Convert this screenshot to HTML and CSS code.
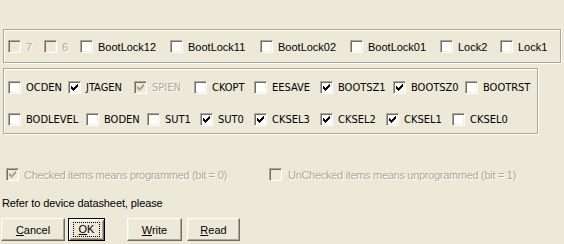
FILE: index.html
```html
<!DOCTYPE html>
<html lang="en">
<head>
    <meta charset="UTF-8">
    <title>Fuse Bits</title>
    <link rel="stylesheet" href="styles.css">
</head>
<body>
    <div class="dialog">
        <!-- Lock bits -->
        <div class="group lock-group">
            <label class="fuse disabled"><span class="box"></span><span class="text">7</span></label>
            <label class="fuse disabled"><span class="box"></span><span class="text">6</span></label>
            <label class="fuse"><span class="box"></span><span class="text">BootLock12</span></label>
            <label class="fuse"><span class="box"></span><span class="text">BootLock11</span></label>
            <label class="fuse"><span class="box"></span><span class="text">BootLock02</span></label>
            <label class="fuse"><span class="box"></span><span class="text">BootLock01</span></label>
            <label class="fuse"><span class="box"></span><span class="text">Lock2</span></label>
            <label class="fuse"><span class="box"></span><span class="text">Lock1</span></label>
        </div>

        <!-- Fuse bits -->
        <div class="group fuse-group">
            <div class="fuse-row high-row">
                <label class="fuse"><span class="box"></span><span class="text">OCDEN</span></label>
                <label class="fuse"><span class="box checked"><svg viewBox="0 0 7 7"><path d="M0 2h1v1h1v1h1v-1h1v-1h1v-1h1v-1h1v3h-1v1h-1v1h-1v1h-1v1h-1v-1h-1v-1h-1v-1h-1z"/></svg></span><span class="text">JTAGEN</span></label>
                <label class="fuse disabled"><span class="box checked"><svg viewBox="0 0 7 7"><path d="M0 2h1v1h1v1h1v-1h1v-1h1v-1h1v-1h1v3h-1v1h-1v1h-1v1h-1v1h-1v-1h-1v-1h-1v-1h-1z"/></svg></span><span class="text">SPIEN</span></label>
                <label class="fuse"><span class="box"></span><span class="text">CKOPT</span></label>
                <label class="fuse"><span class="box"></span><span class="text">EESAVE</span></label>
                <label class="fuse"><span class="box checked"><svg viewBox="0 0 7 7"><path d="M0 2h1v1h1v1h1v-1h1v-1h1v-1h1v-1h1v3h-1v1h-1v1h-1v1h-1v1h-1v-1h-1v-1h-1v-1h-1z"/></svg></span><span class="text">BOOTSZ1</span></label>
                <label class="fuse"><span class="box checked"><svg viewBox="0 0 7 7"><path d="M0 2h1v1h1v1h1v-1h1v-1h1v-1h1v-1h1v3h-1v1h-1v1h-1v1h-1v1h-1v-1h-1v-1h-1v-1h-1z"/></svg></span><span class="text">BOOTSZ0</span></label>
                <label class="fuse"><span class="box"></span><span class="text">BOOTRST</span></label>
            </div>
            <div class="fuse-row low-row">
                <label class="fuse"><span class="box"></span><span class="text">BODLEVEL</span></label>
                <label class="fuse"><span class="box"></span><span class="text">BODEN</span></label>
                <label class="fuse"><span class="box"></span><span class="text">SUT1</span></label>
                <label class="fuse"><span class="box checked"><svg viewBox="0 0 7 7"><path d="M0 2h1v1h1v1h1v-1h1v-1h1v-1h1v-1h1v3h-1v1h-1v1h-1v1h-1v1h-1v-1h-1v-1h-1v-1h-1z"/></svg></span><span class="text">SUT0</span></label>
                <label class="fuse"><span class="box checked"><svg viewBox="0 0 7 7"><path d="M0 2h1v1h1v1h1v-1h1v-1h1v-1h1v-1h1v3h-1v1h-1v1h-1v1h-1v1h-1v-1h-1v-1h-1v-1h-1z"/></svg></span><span class="text">CKSEL3</span></label>
                <label class="fuse"><span class="box checked"><svg viewBox="0 0 7 7"><path d="M0 2h1v1h1v1h1v-1h1v-1h1v-1h1v-1h1v3h-1v1h-1v1h-1v1h-1v1h-1v-1h-1v-1h-1v-1h-1z"/></svg></span><span class="text">CKSEL2</span></label>
                <label class="fuse"><span class="box checked"><svg viewBox="0 0 7 7"><path d="M0 2h1v1h1v1h1v-1h1v-1h1v-1h1v-1h1v3h-1v1h-1v1h-1v1h-1v1h-1v-1h-1v-1h-1v-1h-1z"/></svg></span><span class="text">CKSEL1</span></label>
                <label class="fuse"><span class="box"></span><span class="text">CKSEL0</span></label>
            </div>
        </div>

        <!-- Legend -->
        <div class="legend">
            <label class="fuse disabled"><span class="box checked"><svg viewBox="0 0 7 7"><path d="M0 2h1v1h1v1h1v-1h1v-1h1v-1h1v-1h1v3h-1v1h-1v1h-1v1h-1v1h-1v-1h-1v-1h-1v-1h-1z"/></svg></span><span class="text">Checked items means programmed (bit = 0)</span></label>
            <label class="fuse disabled"><span class="box"></span><span class="text">UnChecked items means unprogrammed (bit = 1)</span></label>
        </div>

        <p class="note">Refer to device datasheet, please</p>

        <div class="buttons">
            <button class="btn btn-cancel"><u>C</u>ancel</button>
            <button class="btn btn-ok default"><span class="focus"><u>O</u>K</span></button>
            <button class="btn btn-write"><u>W</u>rite</button>
            <button class="btn btn-read"><u>R</u>ead</button>
        </div>
    </div>
</body>
</html>
```

FILE: styles.css
```css
/* General Styles */
body {
    margin: 0;
    background-color: #ece9d8; /* Classic dialog face */
    font-family: "Liberation Sans", Arial, sans-serif;
    font-size: 11px;
    color: #000;
}

.dialog {
    padding: 29px 0 0 3px;
}

/* Etched group boxes */
.group {
    box-sizing: border-box;
    border: 1px solid #aca899;
    box-shadow: inset 1px 1px 0 #fff, 1px 1px 0 #fff;
}

.lock-group {
    width: 558px;
    height: 34px;
    padding: 10px 0 0 4px;
    display: grid;
    grid-template-columns: 36px 36px 90px 90px 90px 90px 60px auto;
}

.fuse-group {
    width: 535px;
    height: 66px;
    margin-top: 5px;
    padding: 12px 0 0 4px;
    display: flex;
    flex-direction: column;
    gap: 19px;
    font-family: "DejaVu Sans", sans-serif;
    font-stretch: condensed;
    font-size: 11px;
}

.fuse-row {
    display: grid;
    height: 13px;
}

.high-row {
    grid-template-columns: 60px 66px 60px 60px 66px 73px 72px auto;
}

.low-row {
    grid-template-columns: 78px 61px 53px 54px 66px 66px 66px auto;
}

/* Checkboxes */
.fuse {
    display: flex;
    align-items: center;
    gap: 5px;
    height: 13px;
    white-space: nowrap;
}

.box {
    box-sizing: border-box;
    width: 13px;
    height: 13px;
    flex: none;
    background-color: #fff;
    border: 1px solid;
    border-color: #aca899 #fff #fff #aca899;
    box-shadow: inset 1px 1px 0 #716f64, inset -1px -1px 0 #f1efe2;
    display: flex;
    align-items: center;
    justify-content: center;
}

.box svg {
    width: 7px;
    height: 7px;
    fill: #000;
    shape-rendering: crispEdges;
}

.disabled .box {
    background-color: #ece9d8;
}

.disabled .box svg {
    fill: #aca899;
}

.disabled .text {
    color: #aca899;
    text-shadow: 1px 1px 0 #fff;
}

/* Legend row */
.legend {
    display: grid;
    grid-template-columns: 263px auto;
    margin: 34px 0 0 3px;
    letter-spacing: -0.3px;
}

.legend .fuse:last-child {
    gap: 6px;
}

.note {
    margin: 16px 0 0 -1px;
    line-height: 13px;
    letter-spacing: -0.1px;
}

/* Buttons */
.buttons {
    display: flex;
    margin: 8px 0 0 -2px;
}

.btn {
    box-sizing: border-box;
    height: 23px;
    padding: 0;
    font-family: inherit;
    font-size: 11px;
    color: #000;
    background-color: #ece9d8;
    border: 1px solid;
    border-color: #fff #716f64 #716f64 #fff;
    box-shadow: inset -1px -1px 0 #aca899, inset 1px 1px 0 #f1efe2;
    border-radius: 0;
}

.btn-cancel {
    width: 64px;
}

.btn-ok {
    width: 37px;
    margin-left: 3px;
}

.btn-write {
    width: 55px;
    margin-left: 22px;
}

.btn-read {
    width: 53px;
    margin-left: 5px;
}

/* Default button gets the black frame and focus rectangle */
.btn.default {
    border: 1px solid #000;
    box-shadow: inset 1px 1px 0 #fff, inset -1px -1px 0 #716f64, inset 2px 2px 0 #f1efe2, inset -2px -2px 0 #aca899;
    display: flex;
    align-items: center;
    justify-content: center;
}

.focus {
    display: block;
    box-sizing: border-box;
    width: 27px;
    height: 15px;
    line-height: 13px;
    border: 1px dotted #000;
}
```
